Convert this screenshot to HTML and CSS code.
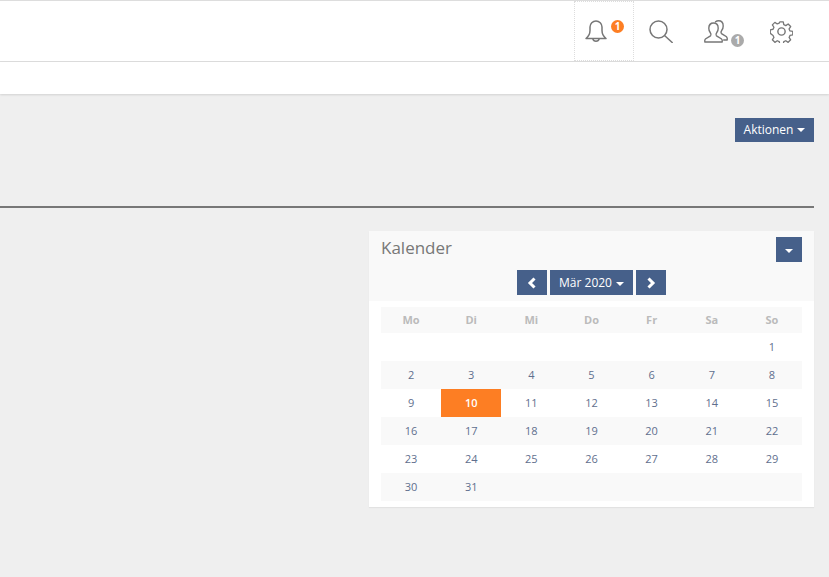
FILE: index.html
```html
<!DOCTYPE html>
<html lang="de">
<head>
<meta charset="utf-8">
<title>Kalender</title>
<link rel="stylesheet" href="styles.css">
</head>
<body>
<header class="topbar">
  <div class="tool tool-bell">
    <svg class="icon" viewBox="0 0 22 23" width="22" height="23" fill="none" stroke="#777" stroke-width="1.500" stroke-linejoin="round" stroke-linecap="round"><path d="M1 18.500c2.500-2 4-4 4-8V7a6 6 0 0 1 12 0v3.500c0 4 1.500 6 4 8z"/><path d="M7.800 18.800a3.300 3.300 0 0 0 6.400 0"/></svg>
    <span class="badge badge-orange">1</span>
  </div>
  <div class="tool tool-search">
    <svg class="icon" viewBox="0 0 24 23" width="24" height="23" fill="none" stroke="#777" stroke-width="1.500" stroke-linecap="round"><circle cx="9.500" cy="9.500" r="8.500"/><path d="M15.800 15.800l7.400 6.700"/></svg>
  </div>
  <div class="tool tool-users">
    <svg class="icon" viewBox="0 0 24 23" width="24" height="23" fill="none" stroke="#777" stroke-width="1.400" stroke-linejoin="round" stroke-linecap="round"><path d="M.8 22v-2c0-2 4.400-2.800 5.800-4.300.8-1 .5-2-.4-3.200-1-1.300-1.400-2.800-1.400-4.300C4.800 5 6.800 3 9.500 3s4.700 2 4.700 5.200c0 1.500-.4 3-1.400 4.300-.9 1.200-1.200 2.200-.4 3.200 1.400 1.500 5.800 2.300 5.800 4.300v2z"/><path d="M11.500 1.800C12.500 1 13.500.8 14.500.8c2.700 0 4.700 2 4.700 5.200 0 1.500-.4 3-1.400 4.300-.9 1.200-1.200 2.200-.4 3.200 1.400 1.500 5.800 2.500 5.800 4.500V20h-3.500"/></svg>
    <span class="badge badge-grey">1</span>
  </div>
  <div class="tool tool-gear">
    <svg class="icon" viewBox="0 0 24 24" width="23" height="23" fill="none" stroke="#777" stroke-width="1.500" stroke-linejoin="round"><circle cx="12" cy="12" r="3.800"/><path d="M10 1h4l.6 3.200 2.300 1 2.700-1.800 2.900 2.900-1.800 2.700 1 2.300 3.200.6v4l-3.200.6-1 2.300 1.800 2.700-2.900 2.900-2.700-1.800-2.300 1-.6 3.200h-4l-.6-3.200-2.300-1-2.700 1.800-2.900-2.900 1.800-2.700-1-2.300L-.9 14v-4l3.200-.6 1-2.300-1.800-2.700 2.900-2.900 2.700 1.800 2.300-1z" transform="translate(1.100 1.100) scale(.91)"/></svg>
  </div>
</header>
<div class="subbar"></div>
<main class="content">
  <div class="actions">
    <button class="btn btn-actions">Aktionen <span class="caret"></span></button>
  </div>
  <hr class="rule">
  <section class="calendar">
    <div class="cal-head">
      <div class="cal-title-row">
        <h2 class="cal-title">Kalender</h2>
        <button class="btn btn-menu"><span class="caret"></span></button>
      </div>
      <div class="cal-nav">
        <button class="btn btn-nav"><svg viewBox="0 0 10 12" width="10" height="12" fill="none" stroke="#fff" stroke-width="3"><path d="M7.500 1.500 3 6l4.500 4.500"/></svg></button>
        <button class="btn btn-month">Mär 2020 <span class="caret"></span></button>
        <button class="btn btn-nav"><svg viewBox="0 0 10 12" width="10" height="12" fill="none" stroke="#fff" stroke-width="3"><path d="M2.500 1.500 7 6l-4.500 4.500"/></svg></button>
      </div>
    </div>
    <div class="cal-body">
      <table class="month">
        <thead><tr><th>Mo</th><th>Di</th><th>Mi</th><th>Do</th><th>Fr</th><th>Sa</th><th>So</th></tr></thead>
        <tbody>
          <tr><td></td><td></td><td></td><td></td><td></td><td></td><td>1</td></tr>
          <tr><td>2</td><td>3</td><td>4</td><td>5</td><td>6</td><td>7</td><td>8</td></tr>
          <tr><td>9</td><td class="today">10</td><td>11</td><td>12</td><td>13</td><td>14</td><td>15</td></tr>
          <tr><td>16</td><td>17</td><td>18</td><td>19</td><td>20</td><td>21</td><td>22</td></tr>
          <tr><td>23</td><td>24</td><td>25</td><td>26</td><td>27</td><td>28</td><td>29</td></tr>
          <tr><td>30</td><td>31</td><td></td><td></td><td></td><td></td><td></td></tr>
        </tbody>
      </table>
    </div>
  </section>
</main>
</body>
</html>
```
FILE: styles.css
```css
* { box-sizing: border-box; }
html, body { margin: 0; height: 100%; }
body {
  background: #efefef;
  font-family: "Open Sans", sans-serif;
  color: #666;
  overflow: hidden;
}
.topbar {
  height: 62px;
  background: #fff;
  border-top: 1px solid #ddd;
  border-bottom: 1px solid #ddd;
  display: flex;
  justify-content: flex-end;
}
.tool {
  position: relative;
  height: 60px;
  padding-top: 19px;
  display: flex;
  justify-content: center;
}
.tool-bell {
  width: 60px;
  padding-top: 18px;
  padding-right: 16px;
  border: 1px dotted #ddd;
}
.tool-search { width: 54px; }
.tool-users { width: 54px; padding-left: 2px; }
.tool-gear { width: 87px; padding-right: 8px; }
.icon { display: block; }
.badge {
  position: absolute;
  width: 13px;
  height: 13px;
  border-radius: 50%;
  color: #fff;
  font-size: 10px;
  font-weight: 700;
  line-height: 13px;
  text-align: center;
}
.badge-orange { background: #fd7e23; top: 18px; left: 36px; }
.badge-grey { background: #aaa; top: 33px; left: 43px; }
.subbar {
  height: 32px;
  background: #fff;
  box-shadow: 0 1px 2px rgba(0,0,0,.12);
}
.content { padding: 0 15px 0 0; }
.actions {
  display: flex;
  justify-content: flex-end;
  padding-top: 24px;
}
.btn {
  border: 0;
  margin: 0;
  padding: 0;
  background: #46608a;
  color: #fff;
  font-family: inherit;
  font-size: 12px;
  display: inline-flex;
  align-items: center;
  justify-content: center;
}
.btn-actions { width: 79px; height: 24px; gap: 4px; padding-bottom: 2px; }
.caret {
  display: inline-block;
  width: 0;
  height: 0;
  margin-top: 2px;
  border-top: 4px solid #fff;
  border-left: 4px solid transparent;
  border-right: 4px solid transparent;
}
.rule {
  border: 0;
  height: 2px;
  background: #777;
  margin: 64px 0 0;
}
.calendar {
  width: 445px;
  margin: 23px 0 0 auto;
  background: #fff;
  box-shadow: 0 1px 1px rgba(0,0,0,.05);
}
.cal-head {
  height: 70px;
  background: #f9f9f9;
  padding: 6px 12px 0;
}
.cal-title-row {
  display: flex;
  justify-content: space-between;
  align-items: flex-start;
}
.cal-title {
  margin: -1px 0 0;
  font-size: 17px;
  font-weight: 400;
  line-height: 23px;
  color: #777;
}
.btn-menu { width: 26px; height: 25px; }
.cal-nav {
  display: flex;
  justify-content: center;
  gap: 3px;
  margin-top: 8px;
}
.btn-nav { width: 30px; height: 25px; }
.btn-month { width: 83px; height: 25px; gap: 4px; }
.cal-body { padding: 6px 12px; }
.month {
  width: 421px;
  table-layout: fixed;
  border-collapse: collapse;
  font-size: 11px;
  text-align: center;
}
.month th {
  height: 26px;
  background: #f9f9f9;
  color: #bbb;
  font-weight: 700;
  padding: 0 0 2px;
}
.month td {
  height: 28px;
  padding: 0 0 2px;
  color: #5f6f8e;
}
.month tbody tr:nth-child(even) td { background: #f9f9f9; }
.month tbody td.today {
  background: #fd7e23;
  color: #fff;
  font-weight: 600;
}
```
